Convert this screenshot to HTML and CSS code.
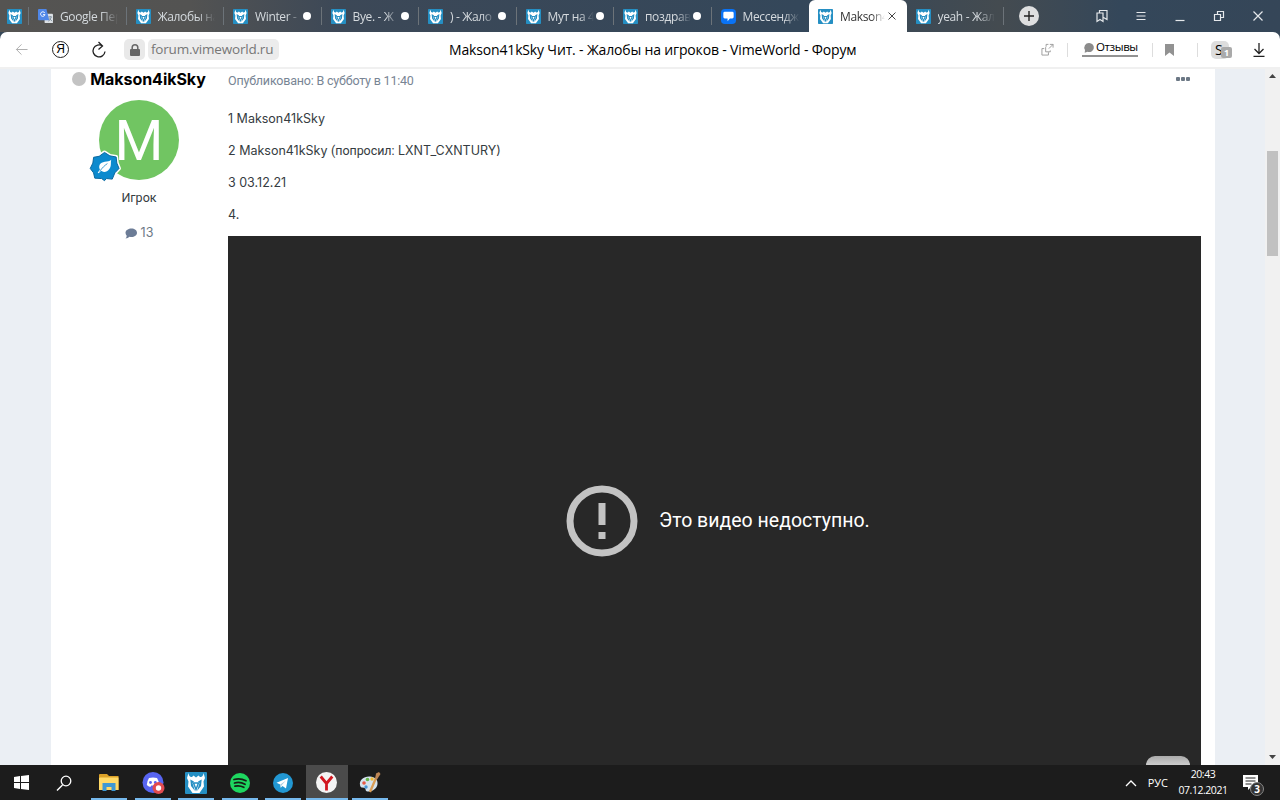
FILE: index.html
```html
<!DOCTYPE html>
<html lang="ru">

<head>
    <meta charset="UTF-8">
    <meta name="viewport" content="width=device-width, initial-scale=1.0">
    <title>Makson41kSky Чит. - Жалобы на игроков - VimeWorld - Форум</title>

    <link rel="stylesheet" href="styles.css">
</head>

<body>
    <!-- shared icons -->
    <svg class="sprite">
        <symbol id="wolf" viewBox="0 0 22 22">
            <rect width="22" height="22" rx="1" fill="#258fc3"/>
            <path d="M3.500 1Q4 5.500 7 5L8.500 3.500 11 5.500l2.500-2L15 5q3 .5 3.500-4L20 6l-1.500 3.500.5 5L14.500 21h-7L3 14.500l.5-5L2 6z" fill="#fff"/>
            <path d="M5.300 7.500L9 9.500l-1.500 1.500L10 19 6 14zM16.700 7.500L13 9.500l1.500 1.500L12 19l4-5z" fill="#258fc3"/>
            <path d="M8.500 11h5L11 17.500z" fill="none" stroke="#258fc3" stroke-width="1.500"/>
        </symbol>
    </svg>

    <div class="tabs">
        <div class="tab small"><svg class="fav"><use href="#wolf"/></svg></div>
        <div class="tab">
            <svg class="fav" viewBox="0 0 16 16"><rect x="7" y="5" width="9" height="10" rx="1" fill="#dce0e4"/><path d="M1 0h8l3 12H1a1 1 0 0 1-1-1V1a1 1 0 0 1 1-1z" fill="#4f87e8"/><path d="M7.300 4.300A2.400 2.400 0 1 0 7.500 6H5.300" fill="none" stroke="#fff"/><path d="M11 8.500h4M13 7.500v1M14 9q-1 3-3 4M12 10l3 3" fill="none" stroke="#66788a" stroke-width=".8"/></svg>
            <span>Google Пер</span>
        </div>
        <div class="tab"><svg class="fav"><use href="#wolf"/></svg><span>Жалобы на</span></div>
        <div class="tab dot"><svg class="fav"><use href="#wolf"/></svg><span>Winter -</span></div>
        <div class="tab dot"><svg class="fav"><use href="#wolf"/></svg><span>Bye. - Ж</span></div>
        <div class="tab dot"><svg class="fav"><use href="#wolf"/></svg><span>) - Жало</span></div>
        <div class="tab dot"><svg class="fav"><use href="#wolf"/></svg><span>Мут на 4</span></div>
        <div class="tab dot"><svg class="fav"><use href="#wolf"/></svg><span>поздрав</span></div>
        <div class="tab last-before">
            <svg class="fav" viewBox="0 0 16 16"><rect width="16" height="16" rx="4" fill="#0a73f5"/><path d="M4 3h8a1.500 1.500 0 0 1 1.500 1.500v4A1.500 1.500 0 0 1 12 10H9.500L7 13v-3H4a1.500 1.500 0 0 1-1.500-1.500v-4A1.500 1.500 0 0 1 4 3z" fill="#fff"/></svg>
            <span>Мессендже</span>
        </div>
        <div class="tab active">
            <svg class="fav"><use href="#wolf"/></svg><span>Makson4</span>
            <svg class="close" viewBox="0 0 8 8"><path d="M.5.5l7 7M7.500.5l-7 7"/></svg>
        </div>
        <div class="tab"><svg class="fav"><use href="#wolf"/></svg><span>yeah - Жал</span></div>
        <div class="plus"><svg viewBox="0 0 20 20"><path d="M10 5v10M5 10h10"/></svg></div>
        <div class="window">
            <svg viewBox="0 0 14 14"><path d="M2 4h6v8.500l-3-2-3 2zM4.500 4V1.500h7.500v9l-3.500-2"/></svg>
            <svg viewBox="0 0 14 14"><path d="M2.500 3.500h9M2.500 7h9M2.500 10.500h9"/></svg>
            <svg viewBox="0 0 14 14"><path d="M2.500 11.500h9"/></svg>
            <svg viewBox="0 0 14 14"><path d="M2.500 5.500h6v6h-6zM5.500 5.500v-3h6v6h-3"/></svg>
            <svg viewBox="0 0 14 14"><path d="M2.500 2.500l9 9M11.500 2.500l-9 9"/></svg>
        </div>
    </div>

    <div class="toolbar">
        <div class="nav">
            <svg class="back" viewBox="0 0 14 14"><path d="M13.500 7H1.500M7 1.500L1.500 7 7 12.500"/></svg>
            <div class="ya">Я</div>
            <svg class="reload" viewBox="0 0 14 16"><path d="M10.500 4A6 6 0 1 0 13 9.500M6.500 0l4 4-4 3.500"/></svg>
            <div class="lock"><svg viewBox="0 0 10 12"><rect y="5" width="10" height="7" rx="1" fill="#666"/><path d="M2.200 5V3.500a2.800 2.800 0 0 1 5.600 0V5" fill="none" stroke="#666" stroke-width="1.500"/></svg></div>
            <div class="url">forum.vimeworld.ru</div>
        </div>
        <div class="title">Makson41kSky Чит. - Жалобы на игроков - VimeWorld - Форум</div>
        <div class="tools">
            <svg class="popout" viewBox="0 0 14 14"><path d="M5 4.500V9.500h5V8M3.500 6H1v7h7v-3M5.500 4V1.500H8M9.500 1.500H13V5M13 1.500L8.500 6"/></svg>
            <i></i>
            <div class="reviews"><svg viewBox="0 0 10 10"><path d="M5 0a4.700 4.500 0 1 1-1.500 8.700L.7 9.800 1 7A4.600 4.600 0 0 1 5 0z" fill="#8b8b8b"/></svg>Отзывы</div>
            <i></i>
            <svg class="mark" viewBox="0 0 9 12"><path d="M0 0h9v12L4.500 8.500 0 12z" fill="#929292"/></svg>
            <i></i>
            <div class="ext">S<b>1</b></div>
            <svg class="down" viewBox="0 0 12 14"><path d="M6 0v10M1.500 6L6 10.500 10.500 6M.5 13.300h11"/></svg>
        </div>
    </div>

    <div class="page">
        <div class="post">
            <div class="author">
                <div class="name"><em></em>Makson4ikSky</div>
                <div class="avatar">М
                    <svg class="rank" viewBox="0 0 34 34">
                        <path d="M17 2.500l5.500 3.500 6.500 1.200.7 6.300 2.300 5.500-4.300 4.500L25 30l-6-.6-2 2.200-3-2.200-7-.4-1.300-5.500L2.300 19 5 13.500 5.800 7.500 11.500 6.500z" fill="#fff" stroke="#fff" stroke-width="4" stroke-linejoin="round"/>
                        <path d="M17 2.500l5.500 3.500 6.500 1.200.7 6.300 2.300 5.500-4.300 4.500L25 30l-6-.6-2 2.200-3-2.200-7-.4-1.300-5.500L2.300 19 5 13.500 5.800 7.500 11.500 6.500z" fill="#0c8ace" stroke="#07659c"/>
                        <path d="M24 10c-1 3 .5 6-2 9.500-2 3-6 4-8.500 2L11 24l-1-.6 2.300-3.200c-2-4 0-7.500 5-8.200 3-.3 4.700-.5 6.700-2z" fill="#fff"/>
                        <path d="M12 22c3-4 5-6 8-8" fill="none" stroke="#087fc1" stroke-width=".8"/>
                    </svg>
                </div>
                <div class="group">Игрок</div>
                <div class="count"><svg viewBox="0 0 12 11"><path d="M6.500.5C9.500.5 12 2.300 12 4.800S9.500 9 6.500 9q-1 0-2-.3Q3 10.500.5 10.500q1.300-1.200 1.200-2.800Q.5 6.500.5 4.800C.5 2.300 3.500.5 6.500.5z" fill="#6c7c96"/></svg>13</div>
            </div>
            <div class="content">
                <div class="meta"><span>Опубликовано: В субботу в 11:40</span><div class="more"><u></u><u></u><u></u></div></div>
                <p>1 Makson41kSky</p>
                <p>2 Makson41kSky <span class="cyr">(попросил:</span> LXNT_CXNTURY)</p>
                <p>3 03.12.21</p>
                <p>4.</p>
                <div class="video">
                    <svg viewBox="0 0 72 72"><circle cx="36" cy="36" r="32" fill="none" stroke="#c3c3c3" stroke-width="7"/><path d="M32.500 18h7v22h-7zM32.500 47h7v7h-7z" fill="#c3c3c3"/></svg>
                    <span>Это видео недоступно.</span>
                    <div class="knob"></div>
                </div>
            </div>
        </div>
        <div class="scroll">
            <svg viewBox="0 0 7 4"><path d="M0 4L3.500 0 7 4z"/></svg>
            <div class="thumb"></div>
            <svg viewBox="0 0 7 4"><path d="M0 0h7L3.500 4z"/></svg>
        </div>
    </div>

    <div class="taskbar">
        <div class="app"><svg width="15" height="15" viewBox="0 0 15 15"><path d="M0 2l6-.9v6H0zM7 1l8-1v7H7zM0 8h6v6l-6-.9zM7 8h8v7l-8-1z" fill="#fff"/></svg></div>
        <div class="app search"><svg width="16" height="16" viewBox="0 0 16 16"><path d="M6.500 10L1 15.500" stroke="#fff" stroke-width="1.400"/><circle cx="10" cy="6" r="4.800" fill="none" stroke="#fff" stroke-width="1.300"/></svg></div>
        <div class="app run"><svg width="20" height="17" viewBox="0 0 20 17"><path d="M0 1q0-1 1-1h7l2 2h9.500v14H0z" fill="#dba128"/><path d="M1 3.500h18.500V16H0V4z" fill="#ffd966"/><path d="M3.500 17V9h13v8h-4v-4h-5v4z" fill="#3e98d3"/></svg></div>
        <div class="app run"><svg width="24" height="24" viewBox="0 0 24 24"><circle cx="12" cy="11.500" r="10.500" fill="#5865f2"/><path d="M8 7q4-1 8 0 2 3 2.300 7-1.500 1.500-3.500 2l-1-1.500h-3.500l-1 1.500q-2-.5-3.500-2Q6 10 8 7z" fill="#fff"/><circle cx="9.500" cy="11.500" r="1.400" fill="#5865f2"/><circle cx="14.300" cy="11.500" r="1.400" fill="#5865f2"/><circle cx="17.500" cy="17" r="6" fill="#e24b50"/><circle cx="17.500" cy="17" r="2.700" fill="#fff"/></svg></div>
        <div class="app run"><svg width="22" height="22"><use href="#wolf"/></svg></div>
        <div class="app run"><svg width="20" height="20" viewBox="0 0 20 20"><circle cx="10" cy="10" r="10" fill="#1ed760"/><path d="M4 6.500q6-1.800 12 1.200M4.500 10q5.500-1.500 10.500 1.200M5 13.200q4.500-1.200 8.800 1.100" fill="none" stroke="#162016" stroke-width="1.800" stroke-linecap="round"/></svg></div>
        <div class="app run"><svg width="20" height="20" viewBox="0 0 20 20"><circle cx="10" cy="10" r="10" fill="#2297d2"/><path d="M3.500 9.700L15 5l-2 10.500-3.500-2.600-1.800 1.800-.5-3.300z" fill="#fff"/><path d="M7.300 11.400l5.700-4-4.400 4.800-.8 2.500z" fill="#a9cde3"/></svg></div>
        <div class="app run current"><svg width="21" height="21" viewBox="0 0 21 21"><circle cx="10.500" cy="10.500" r="10.500" fill="#f4f4f4"/><path d="M4.700 4.500l5.800 7 5.800-7M10.500 11v7.500" fill="none" stroke="#d11720" stroke-width="2.800"/></svg></div>
        <div class="app run"><svg width="22" height="21" viewBox="0 0 22 21"><path d="M1 13C0 8 5 4 11 4.500c5 .5 8 3 7.500 7.500-.5 5-6 8-10 7.500-3-.5-1-3-3-3.500S1.500 16 1 13z" fill="#d4e3ee"/><circle cx="5" cy="11" r="1.800" fill="#e65945"/><circle cx="8.500" cy="7.500" r="1.800" fill="#64b448"/><circle cx="13" cy="7" r="1.700" fill="#efba36"/><circle cx="7" cy="15" r="1.700" fill="#4695d7"/><path d="M11 20l6-14" stroke="#d99d55" stroke-width="2.300"/><path d="M16 7l1-5.500 3-1.500 1.500 2L18 7.500z" fill="#bc8554"/></svg></div>
        <div class="tray">
            <svg class="up" viewBox="0 0 12 8"><path d="M1 7l5-5 5 5" fill="none" stroke="#fff" stroke-width="1.300"/></svg>
            <span class="lang">РУС</span>
            <div class="clock">20:43<br>07.12.2021</div>
            <div class="note"><svg viewBox="0 0 15 15"><path d="M0 0h15v12H8l-3 3v-3H0z" fill="#fff"/><path d="M2.500 3h10M2.500 6h10M2.500 9h6" stroke="#222"/></svg><b>3</b></div>
        </div>
    </div>
</body>

</html>
```
FILE: styles.css
```css
* {
    box-sizing: border-box;
}

body {
    margin: 0;
    width: 1280px;
    height: 800px;
    overflow: hidden;
    display: flex;
    flex-direction: column;
    background: #364758;
    font-family: "Open Sans", "Noto Sans", sans-serif;
}

svg {
    display: block;
    flex: none;
    overflow: visible;
}

.sprite {
    position: absolute;
    width: 0;
    height: 0;
}

/* tabs */
.tabs {
    height: 32px;
    flex: none;
    display: flex;
    background: linear-gradient(90deg, #555452 0, #535352 190px, #3c4857 340px, #34475a 800px, #444b50 1000px, #34475a 1120px, #354658 1280px);
}

.tab {
    width: 97.500px;
    flex: none;
    display: flex;
    align-items: center;
    padding: 0 9px;
    position: relative;
    font-size: 12px;
    letter-spacing: -.350px;
    color: #d5dade;
    white-space: nowrap;
}

.tab::after {
    content: "";
    position: absolute;
    right: 0;
    top: 7px;
    width: 1px;
    height: 18px;
    background: #6c7379;
}

.small {
    width: 29px;
    padding: 0 0 0 7px;
}

.fav {
    width: 15px;
    height: 15px;
}

.tab span {
    margin-left: 7px;
    width: 60px;
    overflow: hidden;
    mask-image: linear-gradient(90deg, #000 70%, transparent);
}

.dot span {
    width: 46px;
}

.dot::before {
    content: "";
    position: absolute;
    left: 79px;
    top: 12px;
    width: 8px;
    height: 8px;
    border-radius: 50%;
    background: #fff;
}

.active {
    background: #fff;
    color: #333;
    border-radius: 6px 6px 0 0;
}

.active span {
    width: 45px;
}

.active::after,
.last-before::after {
    display: none;
}

.close {
    width: 8px;
    height: 8px;
    margin-left: 3px;
    fill: none;
    stroke: #444;
}

.plus {
    width: 20px;
    height: 20px;
    margin: 6px 0 0 15px;
    border-radius: 50%;
    background: #dedfe0;
}

.plus path {
    stroke: #222;
    stroke-width: 1.400;
}

.window {
    margin-left: auto;
    width: 195px;
    padding: 9px 15px 0 10px;
    display: flex;
    justify-content: space-between;
}

.window svg {
    width: 14px;
    height: 14px;
    fill: none;
    stroke: #e5e8eb;
    stroke-width: 1.200;
}

/* address bar */
.toolbar {
    height: 37px;
    flex: none;
    display: flex;
    align-items: center;
    background: #fff;
    border-bottom: 2px solid #f0f0f0;
    border-radius: 7px 7px 0 0;
}

.nav {
    width: 449px;
    padding-left: 15px;
    display: flex;
    align-items: center;
}

.back {
    width: 13px;
    height: 13px;
    fill: none;
    stroke: #aaa;
}

.ya {
    width: 17px;
    height: 17px;
    margin-left: 24px;
    border: 1px solid #222;
    border-radius: 50%;
    font: 12px/15px "Liberation Sans", sans-serif;
    text-align: center;
}

.reload {
    width: 14px;
    height: 16px;
    margin-left: 23px;
    fill: none;
    stroke: #222;
    stroke-width: 1.300;
}

.lock {
    width: 21px;
    height: 21px;
    margin-left: 18px;
    border-radius: 5px;
    background: #e9e9e9;
    display: flex;
    align-items: center;
    justify-content: center;
}

.lock svg {
    width: 10px;
    height: 12px;
}

.url {
    width: 131px;
    height: 21px;
    margin-left: 3px;
    padding-left: 3px;
    border-radius: 5px;
    background: #ececec;
    color: #777;
    font-size: 13.500px;
    letter-spacing: -.2px;
    line-height: 21px;
    white-space: nowrap;
}

.title {
    width: 420px;
    font-size: 14px;
    letter-spacing: -.160px;
    white-space: nowrap;
}

.tools {
    flex: 1;
    display: flex;
    align-items: center;
    padding-left: 172px;
}

.tools i {
    width: 1px;
    height: 14px;
    background: #ddd;
}

.popout {
    width: 13px;
    height: 13px;
    margin-right: 13px;
    fill: none;
    stroke: #999;
}

.reviews {
    width: 56px;
    height: 16px;
    margin: -2px 14px 0;
    padding-left: 2px;
    border-bottom: 2px solid #929292;
    display: flex;
    font-size: 11.500px;
    letter-spacing: -.4px;
    line-height: 12px;
}

.reviews svg {
    width: 10px;
    height: 10px;
    margin: 2px 2px 0 0;
}

.mark {
    width: 9px;
    height: 12px;
    margin: 0 23px 0 12px;
}

.ext {
    width: 18px;
    height: 18px;
    margin-left: 13px;
    border-radius: 5px;
    background: #ddd;
    position: relative;
    font-size: 14px;
    line-height: 17px;
    padding-left: 4px;
}

.ext b {
    position: absolute;
    left: 10px;
    top: 6px;
    width: 11px;
    height: 11px;
    border-radius: 2px;
    background: #aaa;
    color: #fff;
    font-size: 9px;
    line-height: 11px;
    text-align: center;
}

.down {
    width: 12px;
    height: 14px;
    margin-left: 24px;
    fill: none;
    stroke: #222;
    stroke-width: 1.300;
}

/* forum page */
.page {
    height: 696px;
    flex: none;
    display: flex;
    background: #ebeff4;
    font-family: Inter, sans-serif;
    overflow: hidden;
}

.post {
    width: 1164px;
    margin-left: 51px;
    display: flex;
    background: #fff;
}

.author {
    width: 177px;
    padding-right: 1px;
    display: flex;
    flex-direction: column;
    align-items: center;
}

.name {
    height: 20px;
    display: flex;
    align-items: center;
    font-size: 16px;
    letter-spacing: -.050px;
    font-weight: 700;
    color: #000;
}

.name em {
    width: 14px;
    height: 14px;
    margin-right: 4px;
    border-radius: 50%;
    background: #c3c3c3;
}

.avatar {
    width: 80px;
    height: 80px;
    margin-top: 11px;
    border-radius: 50%;
    background: #71c562;
    color: #fff;
    font: 56px/82px Roboto, sans-serif;
    text-align: center;
    position: relative;
}

.rank {
    position: absolute;
    left: -11px;
    top: 50px;
    width: 33px;
    height: 33px;
}

.group {
    margin-top: 10px;
    font: 12.500px/16px Roboto, sans-serif;
    color: #353c41;
}

.count {
    margin-top: 18px;
    display: flex;
    align-items: center;
    gap: 4px;
    font-size: 12.500px;
    line-height: 18px;
    color: #6c7885;
}

.count svg {
    width: 12px;
    height: 11px;
}

.content {
    width: 973px;
    height: 696px;
    display: flex;
    flex-direction: column;
    color: #353c41;
    font-size: 12.500px;
}

.cyr {
    font-family: Roboto, sans-serif;
    letter-spacing: -.050px;
}

.meta {
    height: 22px;
    margin-bottom: 18px;
    display: flex;
    justify-content: space-between;
    font: 12.500px/23px Roboto, sans-serif;
    letter-spacing: -.2px;
    color: #788594;
}

.more {
    display: flex;
    gap: 1px;
    padding: 8px 11px 0 0;
}

.more u {
    width: 4px;
    height: 4px;
    border-radius: 1px;
    background: #6c7885;
}

.content p {
    margin: 0 0 12px;
    line-height: 20px;
}

.content .video {
    margin-top: -1px;
}

.video {
    flex: 1;
    display: flex;
    padding: 249px 0 0 338px;
    background: #282828;
    color: #fff;
    font: 19.500px/71px Roboto, sans-serif;
    position: relative;
}

.video > svg {
    width: 72px;
    height: 72px;
    margin-right: 21px;
}

.knob {
    position: absolute;
    right: 11px;
    bottom: 0;
    width: 44px;
    height: 9px;
    border-radius: 10px 10px 0 0;
    background: linear-gradient(#aaa, #ccc);
}

.scroll {
    width: 15px;
    margin-left: 50px;
    padding: 5px 0 6px;
    display: flex;
    flex-direction: column;
    align-items: center;
    background: #f1f1f1;
}

.scroll svg {
    width: 7px;
    height: 4px;
    fill: #444;
}

.thumb {
    width: 11px;
    height: 105px;
    margin: 73px 0 auto;
    background: #c1c1c1;
}

/* taskbar */
.taskbar {
    height: 35px;
    flex: none;
    display: flex;
    background: #1c1c1c;
    color: #fff;
}

.app {
    width: 42px;
    margin-right: 1.500px;
    display: flex;
    align-items: center;
    justify-content: center;
    position: relative;
}

.search {
    margin-right: 2.500px;
    padding-right: 2px;
}

.run::after {
    content: "";
    position: absolute;
    left: 3px;
    right: 3px;
    bottom: 0;
    height: 2px;
    background: #76b9ed;
}

.current {
    background: #4b4b4b;
}

.current::after {
    left: 0;
    right: 0;
}

.tray {
    margin-left: auto;
    display: flex;
    align-items: center;
    padding-right: 15px;
    font-size: 11px;
}

.up {
    width: 12px;
    height: 8px;
    margin-right: 11px;
}

.clock {
    width: 50px;
    margin: -2px 0 0 10px;
    line-height: 16px;
    font-size: 10.500px;
    letter-spacing: -.450px;
    text-align: center;
    white-space: nowrap;
}

.note {
    width: 22px;
    height: 15px;
    margin-left: 15px;
    position: relative;
}

.note svg {
    width: 15px;
    height: 15px;
}

.note b {
    position: absolute;
    left: 7px;
    top: 7px;
    width: 14px;
    height: 14px;
    border: 1px solid #888;
    border-radius: 50%;
    background: #333;
    font-size: 10px;
    line-height: 12px;
    text-align: center;
}
```
